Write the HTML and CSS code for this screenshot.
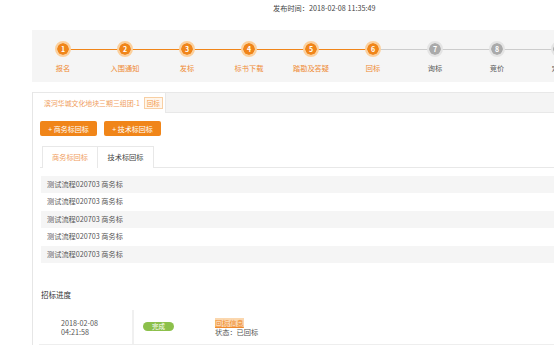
FILE: index.html
```html
<!DOCTYPE html>
<html>
  <head>
    <meta charset="utf-8">
    <link rel="stylesheet" href="styles.css">
  </head>
  <body>
    <div class="page">
      <div class="pub-time">发布时间：2018-02-08 11:35:49</div>
      <ul class="steps">
        <li class="step done"><span class="dot">1</span><span class="name">报名</span></li>
        <li class="step done"><span class="dot">2</span><span class="name">入围通知</span></li>
        <li class="step done"><span class="dot">3</span><span class="name">发标</span></li>
        <li class="step done"><span class="dot">4</span><span class="name">标书下载</span></li>
        <li class="step done"><span class="dot">5</span><span class="name">踏勘及答疑</span></li>
        <li class="step done"><span class="dot">6</span><span class="name">回标</span></li>
        <li class="step"><span class="dot">7</span><span class="name">询标</span></li>
        <li class="step"><span class="dot">8</span><span class="name">竞价</span></li>
        <li class="step"><span class="dot">9</span><span class="name">定标</span></li>
      </ul>
      <div class="box">
        <div class="box-tabs">
          <span class="box-tab">滨河华城文化地块三期三组团-1<em class="tag">回标</em></span>
        </div>
        <div class="box-body">
          <div class="actions">
            <button class="btn">+ 商务标回标</button>
            <button class="btn">+ 技术标回标</button>
          </div>
          <div class="sub-tabs">
            <span class="sub-tab active">商务标回标</span>
            <span class="sub-tab">技术标回标</span>
          </div>
          <ul class="files">
            <li>测试流程020703 商务标</li>
            <li>测试流程020703 商务标</li>
            <li>测试流程020703 商务标</li>
            <li>测试流程020703 商务标</li>
            <li>测试流程020703 商务标</li>
          </ul>
          <h3 class="section-title">招标进度</h3>
          <div class="timeline">
            <div class="tl-time">2018-02-08<br>04:21:58</div>
            <div class="tl-main">
              <span class="badge">完成</span>
              <div class="tl-info">
                <a class="tl-link">回标信息</a>
                <div>状态：已回标</div>
              </div>
            </div>
          </div>
        </div>
      </div>
    </div>
  </body>
</html>
```

FILE: styles.css
```css
html {
  overflow: hidden;
}
body {
  margin: 0;
  font-family: "Noto Sans CJK SC", "Noto Sans", sans-serif;
  font-size: 7.2px;
  color: #555;
  background: #fff;
}
.page {
  width: 640px;
  margin-left: 32px;
}
.pub-time {
  height: 30px;
  line-height: 17px;
  padding-left: 241px;
  color: #444;
}

/* steps */
.steps {
  display: flex;
  height: 52px;
  margin: 0;
  padding: 0;
  list-style: none;
  background: #f5f5f5;
}
.step {
  position: relative;
  flex: none;
  width: 62px;
  display: flex;
  flex-direction: column;
  align-items: center;
  padding-top: 11px;
}
.step + .step::before {
  content: "";
  position: absolute;
  top: 19px;
  left: -31px;
  width: 62px;
  height: 1px;
  background: #ccc;
}
.step.done + .step.done::before {
  background: #f08519;
}
.dot {
  position: relative;
  z-index: 1;
  width: 12px;
  height: 12px;
  border: 2px solid #e4e4e4;
  border-radius: 50%;
  background: #aaa;
  background-clip: padding-box;
  color: #fff;
  font-size: 7px;
  font-weight: bold;
  line-height: 12px;
  text-align: center;
}
.done .dot {
  background: #f08519;
  background-clip: padding-box;
  border-color: #fcd09c;
}
.name {
  margin-top: 6px;
  line-height: 10px;
  white-space: nowrap;
}
.done .name {
  color: #ef8a33;
}

/* bid box */
.box {
  margin-top: 10px;
  border-left: 1px solid #e6e6e6;
}
.box-tabs {
  display: flex;
  height: 19px;
  background: #f4f4f4;
  border-top: 1px solid #e8e8e8;
  border-bottom: 1px solid #e8e8e8;
}
.box-tab {
  display: flex;
  align-items: center;
  height: 20px;
  padding: 0 2px 0 11px;
  background: #fff;
  border-right: 1px solid #e8e8e8;
  color: #f0a060;
  font-size: 6.9px;
}
.tag {
  margin-left: 4px;
  padding: 0 2px;
  border: 1px solid #f8cfa3;
  background: #fff6ec;
  color: #f29a4a;
  font-style: normal;
  font-size: 6.5px;
  line-height: 10px;
}
.box-body {
  padding-left: 7px;
}
.actions {
  display: flex;
  gap: 7px;
  padding-top: 8px;
}
.btn {
  width: 57px;
  height: 15px;
  padding: 0;
  border: 0;
  border-radius: 2px;
  background: #f08519;
  color: #fff;
  font-family: inherit;
  font-size: 7px;
}
.sub-tabs {
  display: flex;
  height: 21px;
  margin-top: 10px;
  padding-left: 2px;
  border-bottom: 1px solid #e8e8e8;
}
.sub-tab {
  box-sizing: border-box;
  width: 57px;
  height: 22px;
  line-height: 20px;
  text-align: center;
  background: #fff;
  border: 1px solid #e8e8e8;
  border-bottom: 0;
  color: #444;
}
.sub-tab.active {
  width: 55px;
  border-right: 0;
  color: #f0a060;
}
.files {
  margin: 8px 0 0 1px;
  padding: 0;
  list-style: none;
}
.files li {
  height: 17.4px;
  line-height: 17.4px;
  padding-left: 6px;
}
.files li:nth-child(odd) {
  background: #f5f5f5;
}
.section-title {
  margin: 26px 0 9px 1px;
  font-size: 7.5px;
  font-weight: normal;
  line-height: 12px;
  color: #333;
}
.timeline {
  display: flex;
  height: 34px;
  margin-left: -1px;
  border-bottom: 1px solid #eee;
}
.tl-time {
  width: 71px;
  padding: 9px 0 0 22px;
  line-height: 9px;
  border-right: 2px solid #f0f0f0;
}
.tl-main {
  display: flex;
  align-items: flex-start;
  padding: 12px 0 0 9px;
}
.badge {
  width: 31px;
  height: 9px;
  border-radius: 5px;
  background: #8cc04b;
  color: #fff;
  font-size: 6.5px;
  line-height: 9px;
  text-align: center;
}
.tl-info {
  margin: -3px 0 0 41px;
  line-height: 9px;
}
.tl-link {
  background: #fbd7ae;
  color: #f08a2c;
  text-decoration: underline;
}
```
